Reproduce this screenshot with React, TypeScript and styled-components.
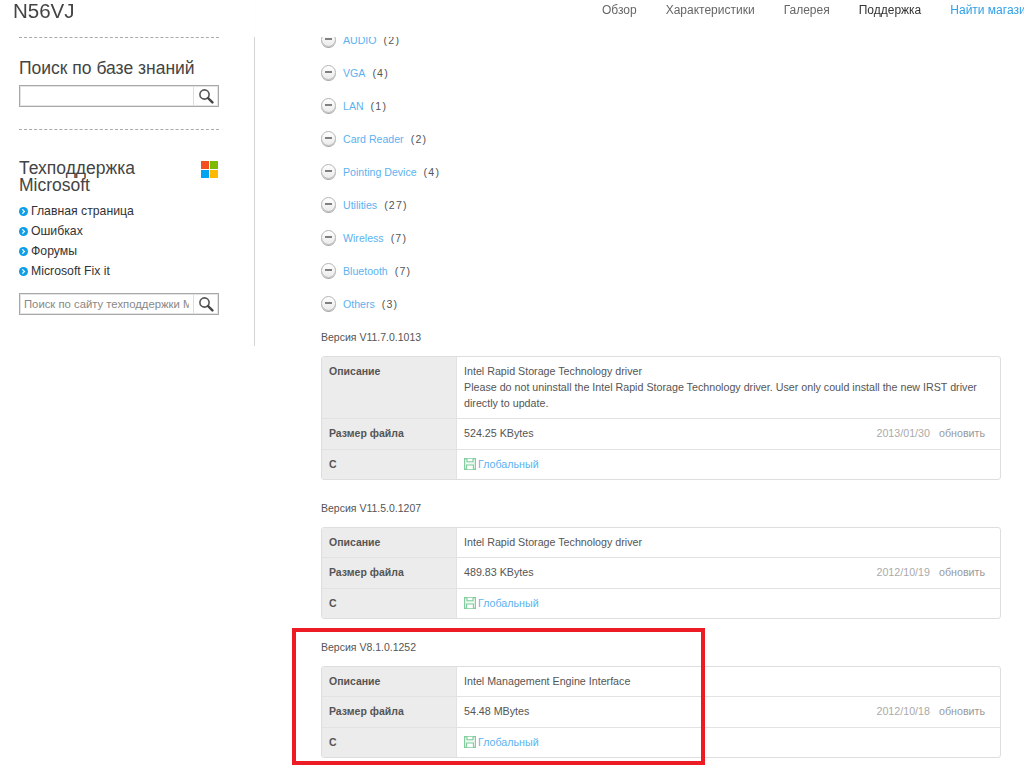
import React from "react";
import styled, { createGlobalStyle } from "styled-components";

const GlobalStyle = createGlobalStyle`
  html, body {
    margin: 0;
    padding: 0;
    height: 768px;
    overflow: hidden;
    background: #fff;
    font-family: "Liberation Sans", Arial, sans-serif;
    color: #555;
  }
`;

const categories = [
  { name: "AUDIO", count: "(2)" },
  { name: "VGA", count: "(4)" },
  { name: "LAN", count: "(1)" },
  { name: "Card Reader", count: "(2)" },
  { name: "Pointing Device", count: "(4)" },
  { name: "Utilities", count: "(27)" },
  { name: "Wireless", count: "(7)" },
  { name: "Bluetooth", count: "(7)" },
  { name: "Others", count: "(3)" },
];

const versions = [
  {
    version: "Версия V11.7.0.1013",
    description: [
      "Intel Rapid Storage Technology driver",
      "Please do not uninstall the Intel Rapid Storage Technology driver. User only could install the new IRST driver directly to update.",
    ],
    size: "524.25 KBytes",
    date: "2013/01/30",
  },
  {
    version: "Версия V11.5.0.1207",
    description: ["Intel Rapid Storage Technology driver"],
    size: "489.83 KBytes",
    date: "2012/10/19",
  },
  {
    version: "Версия V8.1.0.1252",
    description: ["Intel Management Engine Interface"],
    size: "54.48 MBytes",
    date: "2012/10/18",
  },
];

const msLinks = ["Главная страница", "Ошибках", "Форумы", "Microsoft Fix it"];

const SearchIcon = () => (
  <svg width="16" height="16" viewBox="0 0 16 16" fill="none">
    <circle cx="6.5" cy="6.5" r="4.6" stroke="#555" strokeWidth="1.6" />
    <path d="M10 10l4.4 4.4" stroke="#444" strokeWidth="2.4" strokeLinecap="round" />
  </svg>
);

const BulletIcon = () => (
  <svg width="9" height="9" viewBox="0 0 9 9">
    <circle cx="4.5" cy="4.5" r="4.5" fill="#0d9ee8" />
    <path d="M3.4 2.4l2 2.1-2 2.1" fill="none" stroke="#fff" strokeWidth="1.3" />
  </svg>
);

const SaveIcon = () => (
  <svg width="12" height="12" viewBox="0 0 12 12" fill="none">
    <path d="M.6.6h10.8v10.8H.6z" fill="#eef8f1" stroke="#7ecb9b" strokeWidth="1.1" />
    <path d="M3 .8v3h6v-3M2.6 11.2V7h6.8v4.2" fill="#fff" stroke="#7ecb9b" strokeWidth="1.1" />
  </svg>
);

const WindowsLogo = () => (
  <svg width="17" height="17" viewBox="0 0 17 17">
    <rect width="8" height="8" fill="#f25022" />
    <rect x="9" width="8" height="8" fill="#7fba00" />
    <rect y="9" width="8" height="8" fill="#00a4ef" />
    <rect x="9" y="9" width="8" height="8" fill="#ffb900" />
  </svg>
);

const App: React.FC = () => {
  return (
    <>
      <GlobalStyle />
      <Header>
        <Model>N56VJ</Model>
        <Nav>
          <NavItem>Обзор</NavItem>
          <NavItem>Характеристики</NavItem>
          <NavItem>Галерея</NavItem>
          <NavItem $active>Поддержка</NavItem>
          <NavItem $link>Найти магазин</NavItem>
        </Nav>
      </Header>
      <Page>
        <Sidebar>
          <SearchSection>
            <SectionTitle>Поиск по базе знаний</SectionTitle>
            <SearchBox>
              <SearchInput />
              <SearchButton>
                <SearchIcon />
              </SearchButton>
            </SearchBox>
          </SearchSection>
          <MicrosoftSection>
            <MicrosoftHead>
              <MicrosoftTitle>Техподдержка Microsoft</MicrosoftTitle>
              <WindowsLogo />
            </MicrosoftHead>
            <LinkList>
              {msLinks.map((link) => (
                <LinkRow key={link}>
                  <BulletIcon />
                  {link}
                </LinkRow>
              ))}
            </LinkList>
            <SearchBox>
              <SearchInput placeholder="Поиск по сайту техподдержки Microsoft" />
              <SearchButton>
                <SearchIcon />
              </SearchButton>
            </SearchBox>
          </MicrosoftSection>
        </Sidebar>
        <Main>
          <ScrolledTable />
          <CategoryList>
            {categories.map((cat) => (
              <CategoryRow key={cat.name}>
                <MinusButton />
                <CategoryName>{cat.name}</CategoryName>
                <CategoryCount>{cat.count}</CategoryCount>
              </CategoryRow>
            ))}
          </CategoryList>
          {versions.map((item) => (
            <VersionBlock key={item.version}>
              <VersionLabel>{item.version}</VersionLabel>
              <InfoTable>
                <TableRow>
                  <LabelCell>Описание</LabelCell>
                  <DescriptionCell>
                    {item.description.map((line) => (
                      <div key={line}>{line}</div>
                    ))}
                  </DescriptionCell>
                </TableRow>
                <TableRow>
                  <LabelCell>Размер файла</LabelCell>
                  <ValueCell>
                    <span>{item.size}</span>
                    <DateInfo>
                      {item.date}
                      <UpdateLink>обновить</UpdateLink>
                    </DateInfo>
                  </ValueCell>
                </TableRow>
                <TableRow>
                  <LabelCell>C</LabelCell>
                  <ValueCell>
                    <DownloadLink>
                      <SaveIcon />
                      Глобальный
                    </DownloadLink>
                  </ValueCell>
                </TableRow>
              </InfoTable>
            </VersionBlock>
          ))}
        </Main>
      </Page>
      <Highlight />
    </>
  );
};

const Header = styled.header`
  position: fixed;
  top: 0;
  left: 0;
  width: 1024px;
  height: 37px;
  background: rgba(255, 255, 255, 0.95);
  z-index: 2;
  display: flex;
  justify-content: space-between;
  overflow: hidden;
`;

const Model = styled.div`
  margin: 0 0 0 13px;
  font-size: 20.5px;
  line-height: 21px;
  color: #444;
`;

const Nav = styled.nav`
  display: flex;
  gap: 29px;
  width: 422px;
  flex-shrink: 0;
  font-size: 12px;
  line-height: 20px;
  white-space: nowrap;
`;

const NavItem = styled.span<{ $active?: boolean; $link?: boolean }>`
  color: ${({ $active, $link }) => ($active ? "#333" : $link ? "#2f9fe8" : "#666")};
`;

const Page = styled.div`
  display: grid;
  grid-template-columns: 255px 1fr;
  align-items: start;
`;

const Sidebar = styled.aside`
  height: 346px;
  box-sizing: border-box;
  padding: 37px 0 0 19px;
  border-right: 1px solid #d4d4d4;
`;

const SearchSection = styled.section`
  width: 200px;
  height: 93px;
  box-sizing: border-box;
  border-top: 1px dashed #aaa;
  border-bottom: 1px dashed #aaa;
  padding-top: 20px;
`;

const SectionTitle = styled.h3`
  margin: 0 0 7px;
  font-size: 17.5px;
  line-height: 20px;
  font-weight: normal;
  color: #444;
`;

const SearchBox = styled.div`
  width: 200px;
  height: 22px;
  box-sizing: border-box;
  display: flex;
  border: 1px solid #a8a8a8;
  box-shadow: inset 0 0 0 1px #e4e4e4;
`;

const SearchInput = styled.input`
  flex: 1;
  min-width: 0;
  box-sizing: border-box;
  border: none;
  outline: none;
  background: transparent;
  padding: 0 4px;
  font-family: inherit;
  font-size: 11.3px;
  color: #555;
  &::placeholder {
    color: #888;
    opacity: 1;
  }
`;

const SearchButton = styled.div`
  width: 24px;
  display: flex;
  align-items: center;
  justify-content: center;
  border-left: 1px solid #ddd;
  margin: 1px 0;
`;

const MicrosoftSection = styled.section`
  width: 200px;
  padding-top: 30px;
`;

const MicrosoftHead = styled.div`
  display: flex;
  justify-content: space-between;
  align-items: flex-start;
  padding-right: 1px;
  svg {
    margin-top: 1px;
  }
`;

const MicrosoftTitle = styled.h3`
  margin: 0;
  width: 130px;
  font-size: 17.5px;
  line-height: 17px;
  font-weight: normal;
  color: #444;
`;

const LinkList = styled.ul`
  list-style: none;
  margin: 7px 0 12px;
  padding: 0;
`;

const LinkRow = styled.li`
  height: 20px;
  display: flex;
  align-items: center;
  gap: 3px;
  font-size: 12.25px;
  color: #333;
`;

const Main = styled.main`
  padding: 0 23px 0 66px;
`;

const ScrolledTable = styled.div`
  height: 10px;
  margin-bottom: 13px;
  border: 1px solid #f4f4f4;
  border-top: none;
  box-sizing: border-box;
`;

const CategoryList = styled.div`
  display: flex;
  flex-direction: column;
  margin-bottom: 7px;
`;

const CategoryRow = styled.div`
  height: 33px;
  display: flex;
  align-items: center;
  font-size: 10.6px;
`;

const MinusButton = styled.span`
  position: relative;
  width: 15px;
  height: 15px;
  box-sizing: border-box;
  flex-shrink: 0;
  margin-right: 7px;
  border-radius: 50%;
  border: 1px solid #b5b5b5;
  box-shadow: 0 1px 0 #a8a8a8;
  background: linear-gradient(#fff, #ebebeb);
  &::after {
    content: "";
    position: absolute;
    left: 3px;
    right: 3px;
    top: 5px;
    height: 2px;
    background: #808080;
  }
`;

const CategoryName = styled.span`
  color: #5cb2f0;
`;

const CategoryCount = styled.span`
  margin-left: 7px;
  color: #555;
  letter-spacing: 1.2px;
`;

const VersionBlock = styled.section`
  margin-bottom: 18px;
`;

const VersionLabel = styled.div`
  height: 20px;
  font-size: 10.5px;
  line-height: 20px;
  color: #555;
`;

const InfoTable = styled.div`
  margin-top: 9px;
  border: 1px solid #dedede;
  border-radius: 3px;
  overflow: hidden;
`;

const TableRow = styled.div`
  display: grid;
  grid-template-columns: 135px 1fr;
  border-top: 1px solid #e2e2e2;
  &:first-child {
    border-top: none;
  }
  &:last-child > div {
    padding-bottom: 7px;
  }
`;

const LabelCell = styled.div`
  background: #ececec;
  padding: 6px 7px 7px;
  font-size: 10.5px;
  line-height: 16px;
  font-weight: bold;
  color: #555;
  border-right: 1px solid #e2e2e2;
`;

const DescriptionCell = styled.div`
  padding: 6px 7px 7px;
  font-size: 10.7px;
  line-height: 16px;
  color: #555;
`;

const ValueCell = styled(DescriptionCell)`
  display: flex;
  justify-content: space-between;
  padding-right: 15px;
  padding-bottom: 8px;
`;

const DateInfo = styled.span`
  color: #aaa;
`;

const UpdateLink = styled.span`
  margin-left: 9px;
  color: #999;
`;

const DownloadLink = styled.span`
  display: flex;
  align-items: center;
  gap: 2px;
  color: #5cb2f0;
`;

const Highlight = styled.div`
  position: fixed;
  left: 292px;
  top: 628px;
  width: 413px;
  height: 137px;
  box-sizing: border-box;
  border: 4px solid #ed1c24;
  z-index: 3;
`;

export default App;
